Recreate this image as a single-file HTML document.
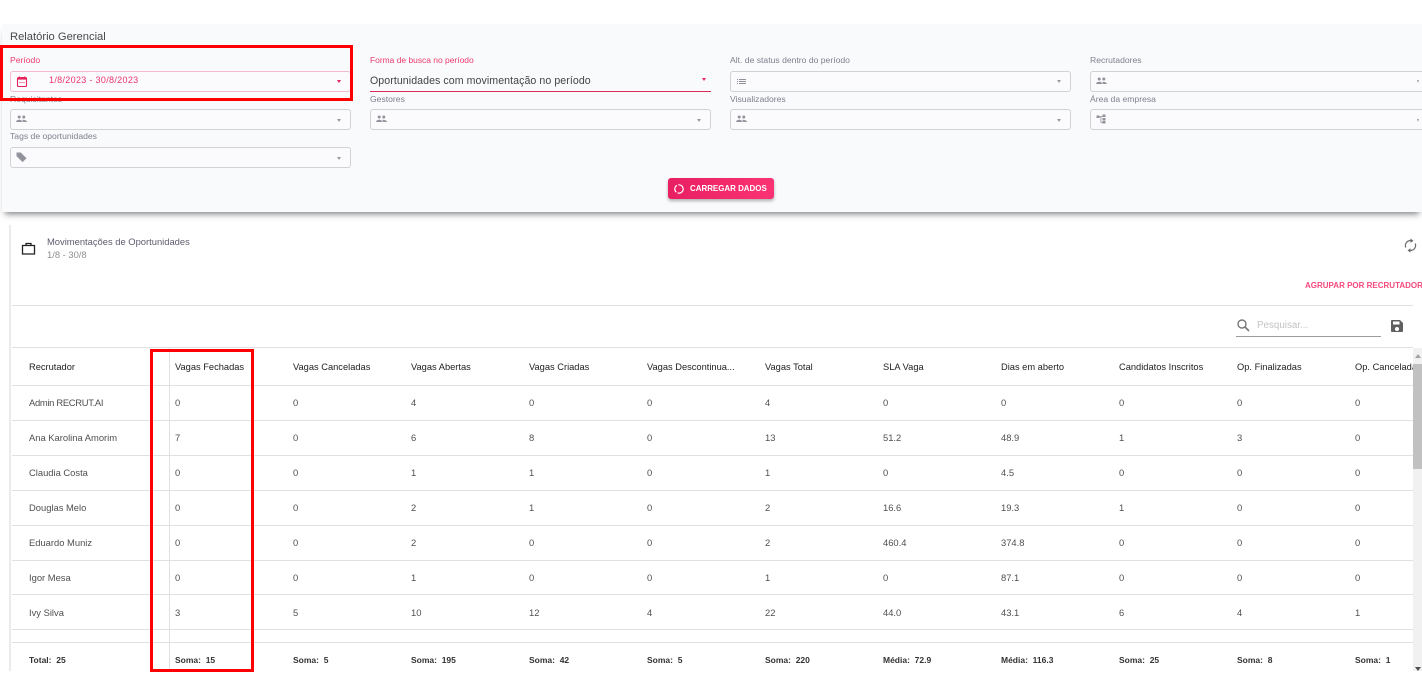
<!DOCTYPE html>
<html lang="pt-BR">
<head>
<meta charset="utf-8">
<title>Relatório Gerencial</title>
<style>
html,body{margin:0;padding:0;background:#fff}
body{width:1422px;height:681px;position:relative;overflow:hidden;font-family:"Liberation Sans",sans-serif;color:#555}
div,span,svg{position:absolute;box-sizing:border-box}
#w{left:0;top:0;width:1422px;height:681px;filter:blur(.35px)}
.t{white-space:nowrap;line-height:12px}
#panel{left:2px;top:24px;width:1420px;height:188px;background:#f9fafc;box-shadow:0 5px 6px -3px rgba(0,0,0,.5)}
.lab{font-size:8.6px;color:#7f7f8e;height:12px}
.box{height:21px;border:1px solid #d2d2d6;border-radius:3px;background:#fbfbfd}
.arr{width:0;height:0;border-left:2.5px solid transparent;border-right:2.5px solid transparent;border-top:3px solid #9a9a9a}
.ic{fill:#92929c}
#card{left:10px;top:225px;width:1412px;height:446px;background:#fff}
#edge{left:9px;top:225px;width:2px;height:446px;background:#ebebeb}
.line{left:12px;width:1401px;height:1px;background:#e0e0e0}
.r{left:29px;display:grid;grid-template-columns:146px repeat(10,118px) 60px;width:1386px;height:12px;font-size:9.4px;line-height:12px;color:#4f4f4f}
.r>b,.r>i{font-style:normal;font-weight:normal;white-space:nowrap;overflow:hidden}
.h{color:#222;font-size:9.3px}
.f{color:#333;font-weight:bold;font-size:8.5px}
.f>i{font-weight:bold;white-space:pre}
.red{border:3px solid #ff0000}
</style>
</head>
<body>
<div id="w">
<div id="panel"></div>
<div class="t" style="left:10px;top:31px;font-size:11.2px;color:#4a4a4a">Relatório Gerencial</div>

<div class="t lab" style="left:10px;top:54px;color:#ec3a6c">Período</div>
<div class="box" style="left:10px;top:71px;width:341px;border-color:#f3bccd"></div>
<svg style="left:16px;top:75px" width="12" height="13" viewBox="0 0 12 13"><path d="M2.500 2.500h7a1 1 0 0 1 1 1v7a1 1 0 0 1-1 1h-7a1 1 0 0 1-1-1v-7a1 1 0 0 1 1-1z" fill="none" stroke="#e8245f" stroke-width="1.100"/><path d="M1.500 3h9v1.600h-9zM3 1.500h1v1.500H3zM8 1.500h1v1.500H8zM3.500 7h1v1h-1zM5.500 7h1v1h-1zM7.500 7h1v1h-1z" fill="#e8245f"/></svg>
<div class="t" style="left:49px;top:74px;font-size:9px;color:#e8336a;letter-spacing:.32px">1/8/2023 - 30/8/2023</div>
<div class="arr" style="left:337px;top:80px;border-top-color:#e8245f"></div>

<div class="t lab" style="left:370px;top:54px;font-size:8.450px;color:#ec3a6c">Forma de busca no período</div>
<div class="t" style="left:370px;top:75px;font-size:10.600px;color:#444;letter-spacing:.07px">Oportunidades com movimentação no período</div>
<div style="left:370px;top:91px;width:341px;height:1px;background:#df2a5e"></div>
<div class="arr" style="left:702px;top:78px;border-top-color:#e8245f"></div>

<div class="t lab" style="left:730px;top:54px">Alt. de status dentro do período</div>
<div class="box" style="left:730px;top:71px;width:341px"></div>
<svg style="left:736px;top:76px" width="11" height="11" viewBox="0 0 11 11"><path class="ic" d="M1 3h1v1H1zM3 3h7v1H3zM1 5h1v1H1zM3 5h7v1H3zM1 7h1v1H1zM3 7h7v1H3z"/></svg>
<div class="arr" style="left:1057px;top:80px"></div>

<div class="t lab" style="left:1090px;top:54px">Recrutadores</div>
<div class="box" style="left:1090px;top:71px;width:340px"></div>
<svg style="left:1095px;top:75px" width="13" height="12" viewBox="0 0 13 12"><path class="ic" d="M4.200 2.500a1.500 1.500 0 1 1 0 3a1.500 1.500 0 0 1 0-3zM8.800 2.500a1.500 1.500 0 1 1 0 3a1.500 1.500 0 0 1 0-3zM1 9c0-1.400 1.800-2.300 3.200-2.300S7.400 7.600 7.400 9zM8 9c0-.9-.4-1.600-1-2c2-.6 5 .3 5 2z"/></svg>
<div class="arr" style="left:1417px;top:80px;border-left-width:1.500px;border-right-width:1.500px"></div>

<div class="t lab" style="left:10px;top:93px">Requisitantes</div>
<div class="box" style="left:10px;top:109px;width:341px"></div>
<svg style="left:15px;top:113px" width="13" height="12" viewBox="0 0 13 12"><path class="ic" d="M4.200 2.500a1.500 1.500 0 1 1 0 3a1.500 1.500 0 0 1 0-3zM8.800 2.500a1.500 1.500 0 1 1 0 3a1.500 1.500 0 0 1 0-3zM1 9c0-1.400 1.800-2.300 3.200-2.300S7.400 7.600 7.400 9zM8 9c0-.9-.4-1.600-1-2c2-.6 5 .3 5 2z"/></svg>
<div class="arr" style="left:337px;top:119px"></div>

<div class="t lab" style="left:370px;top:93px">Gestores</div>
<div class="box" style="left:370px;top:109px;width:341px"></div>
<svg style="left:375px;top:113px" width="13" height="12" viewBox="0 0 13 12"><path class="ic" d="M4.200 2.500a1.500 1.500 0 1 1 0 3a1.500 1.500 0 0 1 0-3zM8.800 2.500a1.500 1.500 0 1 1 0 3a1.500 1.500 0 0 1 0-3zM1 9c0-1.400 1.800-2.300 3.200-2.300S7.400 7.600 7.400 9zM8 9c0-.9-.4-1.600-1-2c2-.6 5 .3 5 2z"/></svg>
<div class="arr" style="left:697px;top:119px"></div>

<div class="t lab" style="left:730px;top:93px">Visualizadores</div>
<div class="box" style="left:730px;top:109px;width:341px"></div>
<svg style="left:735px;top:113px" width="13" height="12" viewBox="0 0 13 12"><path class="ic" d="M4.200 2.500a1.500 1.500 0 1 1 0 3a1.500 1.500 0 0 1 0-3zM8.800 2.500a1.500 1.500 0 1 1 0 3a1.500 1.500 0 0 1 0-3zM1 9c0-1.400 1.800-2.300 3.200-2.300S7.400 7.600 7.400 9zM8 9c0-.9-.4-1.600-1-2c2-.6 5 .3 5 2z"/></svg>
<div class="arr" style="left:1057px;top:119px"></div>

<div class="t lab" style="left:1090px;top:93px">Área da empresa</div>
<div class="box" style="left:1090px;top:109px;width:340px"></div>
<svg style="left:1095px;top:113px" width="13" height="12" viewBox="0 0 13 12"><path class="ic" d="M1.500 2.500h3v2.500h-3zM7.500 1.500h3v2.500h-3zM7.500 5h3v2.500h-3zM7.500 8h3v2.500h-3zM4.500 3.300h3v.8H6.300v5h1.200v.8H5.500V4.100h-1z"/></svg>
<div class="arr" style="left:1417px;top:119px;border-left-width:1.500px;border-right-width:1.500px"></div>

<div class="t lab" style="left:10px;top:130px">Tags de oportunidades</div>
<div class="box" style="left:10px;top:147px;width:341px"></div>
<svg style="left:15px;top:151px" width="13" height="12" viewBox="0 0 13 12"><path class="ic" d="M1.500 1.500h4.300l5.700 5.700l-3.900 3.900l-6.100-6z"/></svg>
<div class="arr" style="left:337px;top:157px"></div>

<div style="left:668px;top:178px;width:106px;height:21px;border-radius:3px;background:linear-gradient(90deg,#e81f62,#fb3273);box-shadow:0 2px 3px rgba(0,0,0,.3)"></div>
<svg style="left:673px;top:183px" width="12" height="12" viewBox="0 0 12 12"><circle cx="6" cy="6" r="4.200" fill="none" stroke="#fff" stroke-width="1.200" stroke-dasharray="8 1.500"/></svg>
<div class="t" style="left:690px;top:183px;font-size:7.950px;font-weight:bold;color:#fff">CARREGAR DADOS</div>

<div id="card"></div>
<div id="edge"></div>
<svg style="left:21px;top:241px" width="15" height="15" viewBox="0 0 15 15"><path d="M1.500 4.500h12v8.500h-12zM5 4.500V2.500h5v2" fill="none" stroke="#222" stroke-width="1.300"/></svg>
<div class="t" style="left:47px;top:236px;font-size:9.400px;color:#5c5c6e">Movimentações de Oportunidades</div>
<div class="t" style="left:47px;top:249px;font-size:9.400px;color:#8f8f8f">1/8 - 30/8</div>
<svg style="left:1403px;top:238px" width="15" height="15" viewBox="0 0 15 15"><path d="M2.800 9.500A5 5 0 0 1 7 2.600h1.500M12.200 5.500A5 5 0 0 1 8 12.400H6.500" fill="none" stroke="#6b6b6b" stroke-width="1.200"/><path d="M7.500.5l3 2.200l-3 2.200zM7.500 10.200l-3 2.200l3 2.200z" fill="#6b6b6b"/></svg>
<div class="t" style="left:1305px;top:280px;font-size:8px;font-weight:bold;color:#f4497c">AGRUPAR POR RECRUTADOR</div>

<div class="line" style="top:305px"></div>
<svg style="left:1236px;top:318px" width="15" height="15" viewBox="0 0 15 15"><circle cx="6" cy="6" r="4" fill="none" stroke="#777" stroke-width="1.400"/><path d="M9 9l4 4" stroke="#777" stroke-width="1.600"/></svg>
<div class="t" style="left:1257px;top:320px;font-size:9.800px;color:#c4c4c4">Pesquisar...</div>
<div style="left:1236px;top:336px;width:145px;height:1px;background:#9c9c9c"></div>
<svg style="left:1390px;top:319px" width="14" height="14" viewBox="0 0 14 14"><path fill-rule="evenodd" d="M2 1h8l3 3v8a1 1 0 0 1-1 1H2a1 1 0 0 1-1-1V2a1 1 0 0 1 1-1zM3 2.500v3h6.500v-3zM7 8a2 2 0 1 0 0 4a2 2 0 0 0 0-4z" fill="#606060"/></svg>

<div class="line" style="top:347px"></div>
<div class="line" style="top:385px"></div>
<div class="line" style="top:420px"></div>
<div class="line" style="top:455px"></div>
<div class="line" style="top:490px"></div>
<div class="line" style="top:525px"></div>
<div class="line" style="top:560px"></div>
<div class="line" style="top:594px"></div>
<div class="line" style="top:629px"></div>
<div class="line" style="top:642px"></div>
<div style="left:169px;top:347px;width:1px;height:324px;background:#e0e0e0"></div>

<div class="r h" style="top:361px"><b>Recrutador</b><b>Vagas Fechadas</b><b>Vagas Canceladas</b><b>Vagas Abertas</b><b>Vagas Criadas</b><b>Vagas Descontinua...</b><b>Vagas Total</b><b>SLA Vaga</b><b>Dias em aberto</b><b>Candidatos Inscritos</b><b>Op. Finalizadas</b><b>Op. Canceladas</b></div>
<div class="r" style="top:397px"><i style="letter-spacing:-.3px">Admin RECRUT.AI</i><i>0</i><i>0</i><i>4</i><i>0</i><i>0</i><i>4</i><i>0</i><i>0</i><i>0</i><i>0</i><i>0</i></div>
<div class="r" style="top:432px"><i>Ana Karolina Amorim</i><i>7</i><i>0</i><i>6</i><i>8</i><i>0</i><i>13</i><i>51.2</i><i>48.9</i><i>1</i><i>3</i><i>0</i></div>
<div class="r" style="top:467px"><i>Claudia Costa</i><i>0</i><i>0</i><i>1</i><i>1</i><i>0</i><i>1</i><i>0</i><i>4.5</i><i>0</i><i>0</i><i>0</i></div>
<div class="r" style="top:502px"><i>Douglas Melo</i><i>0</i><i>0</i><i>2</i><i>1</i><i>0</i><i>2</i><i>16.6</i><i>19.3</i><i>1</i><i>0</i><i>0</i></div>
<div class="r" style="top:537px"><i>Eduardo Muniz</i><i>0</i><i>0</i><i>2</i><i>0</i><i>0</i><i>2</i><i>460.4</i><i>374.8</i><i>0</i><i>0</i><i>0</i></div>
<div class="r" style="top:572px"><i>Igor Mesa</i><i>0</i><i>0</i><i>1</i><i>0</i><i>0</i><i>1</i><i>0</i><i>87.1</i><i>0</i><i>0</i><i>0</i></div>
<div class="r" style="top:607px"><i>Ivy Silva</i><i>3</i><i>5</i><i>10</i><i>12</i><i>4</i><i>22</i><i>44.0</i><i>43.1</i><i>6</i><i>4</i><i>1</i></div>
<div class="r f" style="top:654px"><i>Total:  25</i><i>Soma:  15</i><i>Soma:  5</i><i>Soma:  195</i><i>Soma:  42</i><i>Soma:  5</i><i>Soma:  220</i><i>Média:  72.9</i><i>Média:  116.3</i><i>Soma:  25</i><i>Soma:  8</i><i>Soma:  1</i></div>

<div style="left:1413px;top:348px;width:9px;height:323px;background:#f1f1f1"></div>
<div style="left:1413px;top:364px;width:9px;height:105px;background:#c1c1c1"></div>
<div style="left:1415px;top:354px;width:0;height:0;border-left:3px solid transparent;border-right:3px solid transparent;border-bottom:4px solid #a3a3a3"></div>
<div style="left:1415px;top:667px;width:0;height:0;border-left:3px solid transparent;border-right:3px solid transparent;border-top:4px solid #505050"></div>
</div>

<div class="red" style="left:0;top:45px;width:353px;height:56px"></div>
<div class="red" style="left:150px;top:349px;width:104px;height:323px"></div>
</body>
</html>
